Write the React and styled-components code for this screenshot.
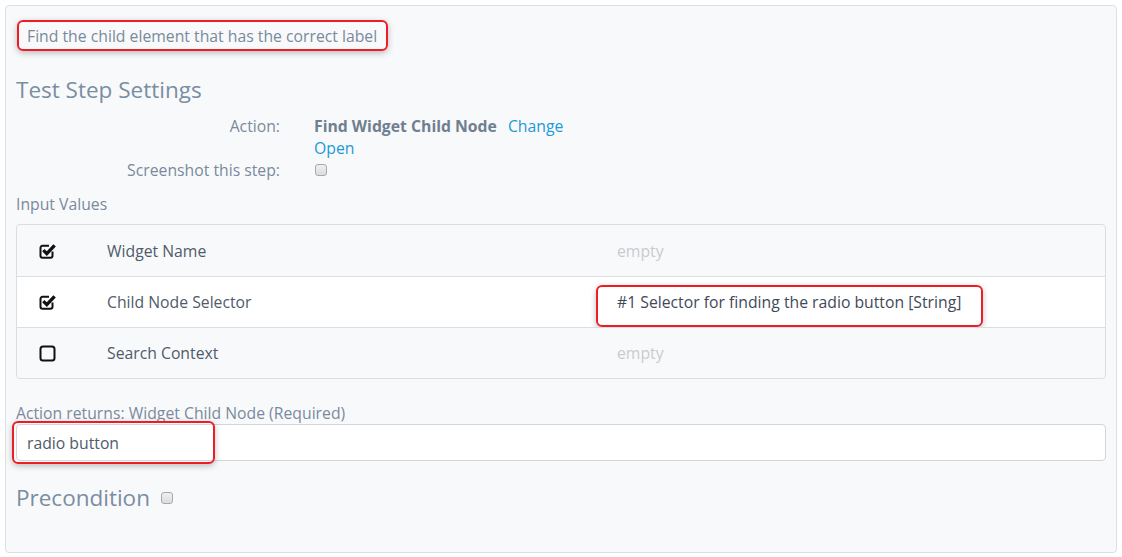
import React from "react";
import styled, { createGlobalStyle } from "styled-components";

const Global = createGlobalStyle`
  html, body { margin: 0; padding: 0; background: #ffffff; }
  body { font-family: "Open Sans", "Liberation Sans", sans-serif; font-size: 15.75px; color: #7a8a9c; }
  * { box-sizing: border-box; }
`;

const Panel = styled.div`
  margin: 5px;
  width: 1112px;
  height: 548px;
  border: 1px solid #dcdfe3;
  border-radius: 4px;
  background: #f8f9fb;
  padding: 14px 10px 0 10px;
  display: flex;
  flex-direction: column;
`;

const Annotation = styled.div`
  position: relative;
  display: inline-flex;
  align-items: center;
  align-self: flex-start;
  border: 2px solid #ee1c25;
  border-radius: 6px;
  box-shadow: 0 2px 6px rgba(0, 0, 0, 0.25);
  height: 31px;
  margin-left: 1px;
  padding: 0 9px 0 8px;
  color: #7a8a9c;
`;

const Overlay = styled.div`
  position: absolute;
  left: ${(p) => p.$left}px;
  top: ${(p) => p.$top}px;
  width: ${(p) => p.$width}px;
  height: ${(p) => p.$height}px;
  border: 2px solid #ee1c25;
  border-radius: 6px;
  box-shadow: 0 2px 6px rgba(0, 0, 0, 0.25);
  pointer-events: none;
`;

const Heading = styled.h2`
  margin: ${(p) => p.$mt}px 0 0 0;
  font-size: 22.5px;
  font-weight: 400;
  line-height: 32px;
  color: #7b8da1;
  display: flex;
  align-items: center;
  gap: 11px;
`;

const FormGrid = styled.div`
  display: grid;
  grid-template-columns: 264px 1fr;
  column-gap: 34px;
  margin-top: 9px;
  line-height: 22px;
`;

const FieldLabel = styled.div`
  text-align: right;
  color: #7a8a9c;
`;

const FieldValue = styled.div`
  color: #7a8a9c;
  display: flex;
  flex-wrap: wrap;
  align-items: center;
  min-height: 22px;
`;

const Strong = styled.span`
  font-weight: 700;
  color: #6f7f90;
  margin-right: 11px;
`;

const Link = styled.a`
  color: #1d9ad6;
  text-decoration: none;
  cursor: pointer;
`;

const LinkLine = styled.div`
  width: 100%;
`;

const SmallBox = styled.span`
  display: inline-block;
  width: 12px;
  height: 12px;
  border: 1px solid #a9a9a9;
  border-radius: 3px;
  background: linear-gradient(#f0f0f0, #dcdcdc);
  margin-left: ${(p) => p.$ml || 0}px;
`;

const SectionLabel = styled.div`
  margin-top: 12px;
  line-height: 22px;
  color: #7a8a9c;
`;

const Table = styled.div`
  margin-top: 9px;
  border: 1px solid #dadde1;
  border-radius: 4px;
`;

const Row = styled.div`
  position: relative;
  display: grid;
  grid-template-columns: 90px 510px 1fr;
  align-items: center;
  height: 51px;
  background: ${(p) => (p.$white ? "#ffffff" : "#f8f9fb")};
  border-top: ${(p) => (p.$first ? "none" : "1px solid #dadde1")};
  border-radius: ${(p) => (p.$first ? "4px 4px 0 0" : p.$last ? "0 0 4px 4px" : "0")};
`;

const IconCell = styled.div`
  padding-left: 22px;
  display: flex;
  align-items: center;
`;

const NameCell = styled.div`
  color: #4f5b6a;
`;

const ValueCell = styled.div`
  color: ${(p) => (p.$empty ? "#c9cbce" : "#3f4a59")};
`;

const ReturnLabel = styled.div`
  margin-top: 23px;
  line-height: 22px;
  color: #7a8a9c;
`;

const InputWrap = styled.div`
  position: relative;
  margin-top: 0;
`;

const TextInput = styled.div`
  height: 37px;
  border: 1px solid #d2d5d9;
  border-radius: 4px;
  background: #ffffff;
  padding: 0 10px;
  display: flex;
  align-items: center;
  color: #4f5b6a;
`;

const CheckIcon = ({ checked }) => (
  <svg width="18" height="18" viewBox="0 0 18 18">
    {checked ? (
      <>
        <path
          d="M13.5 9.5 V13.8 a2 2 0 0 1 -2 2 H3.5 a2 2 0 0 1 -2 -2 V5.8 a2 2 0 0 1 2 -2 H10"
          fill="none"
          stroke="#111"
          strokeWidth="2"
        />
        <path d="M4.3 8.2 L7.8 11.7 L15.6 3.4" fill="none" stroke="#111" strokeWidth="3.3" strokeLinejoin="miter" />
      </>
    ) : (
      <rect x="1.5" y="2.5" width="14" height="14" rx="2.5" fill="none" stroke="#111" strokeWidth="2" />
    )}
  </svg>
);

const rows = [
  { name: "Widget Name", value: "empty", empty: true, checked: true },
  { name: "Child Node Selector", value: "#1 Selector for finding the radio button [String]", checked: true, white: true, mark: true },
  { name: "Search Context", value: "empty", empty: true, checked: false },
];

export default function App() {
  return (
    <>
      <Global />
      <Panel>
        <Annotation>Find the child element that has the correct label</Annotation>
        <Heading $mt={23}>Test Step Settings</Heading>
        <FormGrid>
          <FieldLabel>Action:</FieldLabel>
          <FieldValue>
            <Strong>Find Widget Child Node</Strong>
            <Link>Change</Link>
            <LinkLine>
              <Link>Open</Link>
            </LinkLine>
          </FieldValue>
          <FieldLabel>Screenshot this step:</FieldLabel>
          <FieldValue>
            <SmallBox $ml={1} />
          </FieldValue>
        </FormGrid>
        <SectionLabel>Input Values</SectionLabel>
        <Table>
          {rows.map((r, i) => (
            <Row key={r.name} $white={r.white} $first={i === 0} $last={i === rows.length - 1}>
              <IconCell>
                <CheckIcon checked={r.checked} />
              </IconCell>
              <NameCell>{r.name}</NameCell>
              <ValueCell $empty={r.empty}>{r.value}</ValueCell>
              {r.mark && <Overlay $left={579} $top={8} $width={387} $height={42} />}
            </Row>
          ))}
        </Table>
        <ReturnLabel>Action returns: Widget Child Node (Required)</ReturnLabel>
        <InputWrap>
          <TextInput>radio button</TextInput>
          <Overlay $left={-4} $top={-3} $width={203} $height={43} />
        </InputWrap>
        <Heading $mt={21}>
          Precondition
          <SmallBox />
        </Heading>
      </Panel>
    </>
  );
}
